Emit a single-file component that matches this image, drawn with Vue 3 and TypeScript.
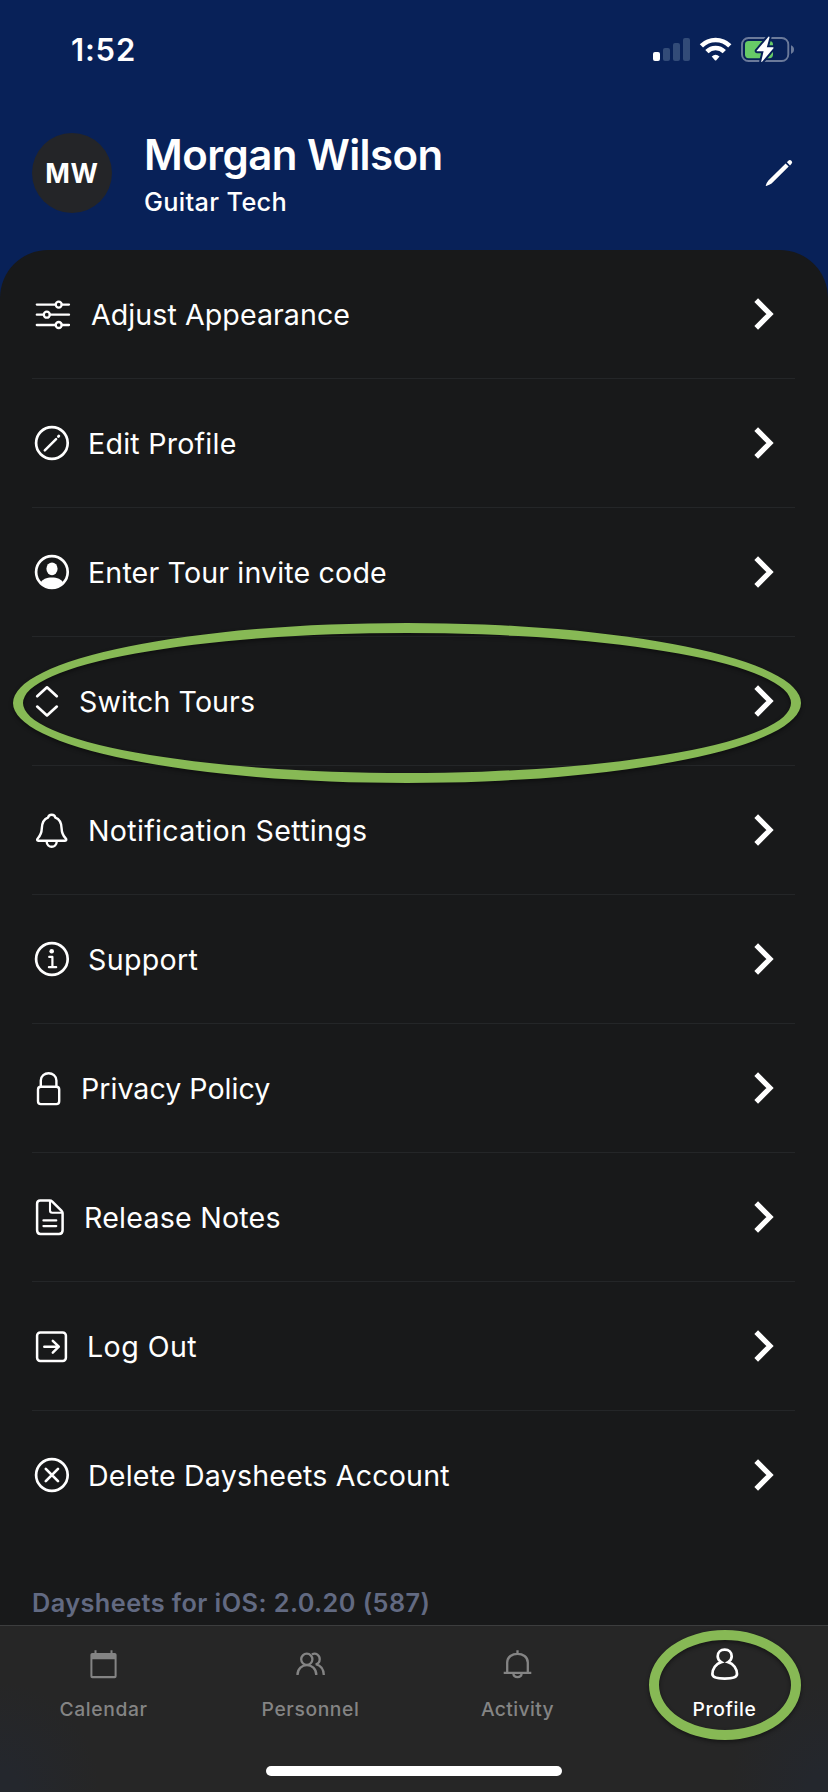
<script setup lang="ts">
interface MenuItem {
  id: string
  label: string
  /** Width of the icon column, which sets where the label starts */
  slot: number
  tracking: number
}

interface Tab {
  id: string
  label: string
  tracking: number
  active?: boolean
}

const menu: MenuItem[] = [
  { id: 'appearance', label: 'Adjust Appearance', slot: 59, tracking: 0.06 },
  { id: 'edit', label: 'Edit Profile', slot: 56, tracking: 0.23 },
  { id: 'invite', label: 'Enter Tour invite code', slot: 56, tracking: 0.15 },
  { id: 'switch', label: 'Switch Tours', slot: 47, tracking: 0.08 },
  { id: 'notifications', label: 'Notification Settings', slot: 56, tracking: 0.31 },
  { id: 'support', label: 'Support', slot: 56, tracking: 0.33 },
  { id: 'privacy', label: 'Privacy Policy', slot: 49, tracking: 0 },
  { id: 'release', label: 'Release Notes', slot: 52, tracking: 0.22 },
  { id: 'logout', label: 'Log Out', slot: 55, tracking: 0.44 },
  { id: 'delete', label: 'Delete Daysheets Account', slot: 56, tracking: 0.19 },
]

const tabs: Tab[] = [
  { id: 'calendar', label: 'Calendar', tracking: 0.61 },
  { id: 'personnel', label: 'Personnel', tracking: 0.61 },
  { id: 'activity', label: 'Activity', tracking: 0.39 },
  { id: 'profile', label: 'Profile', tracking: 0.63, active: true },
]
</script>

<template>
  <div class="screen">
    <div class="statusbar">
      <span class="time">1:52</span>
      <svg class="status-icons" width="144" height="32" viewBox="0 0 144 32">
        <rect x="3" y="18" width="7" height="9" rx="2" fill="#fff" />
        <g fill="#324b78">
          <rect x="13" y="14" width="7" height="13" rx="2" />
          <rect x="23" y="9" width="7" height="18" rx="2" />
          <rect x="33" y="4" width="7" height="23" rx="2" />
        </g>
        <g fill="none" stroke="#fff" stroke-width="4.6">
          <path d="M51.4 11.8A20.2 20.2 0 0 1 79.8 11.8" />
          <path d="M56.9 17.6A12.4 12.4 0 0 1 74.3 17.6" />
        </g>
        <path d="M61.7 22.6Q65.6 19 69.5 22.6L66.3 26.2Q65.6 26.9 64.9 26.2Z" fill="#fff" />
        <rect x="92" y="4" width="46.3" height="23" rx="6.5" fill="none" stroke="#6b7a9a" stroke-width="1.9" />
        <path d="M141 11.3Q144 12.5 144 15.6T141 19.9Z" fill="#6b7a9a" />
        <rect x="95" y="7" width="28" height="17.2" rx="3.6" fill="#67ca67" />
        <path
          d="M118.4 2.8L106.8 16.6Q106.4 17.3 107.2 17.3H113.6L111.2 27.4Q111.4 28.4 112.3 27.6L123.5 14.2Q123.9 13.4 123 13.3H116.8L119.5 3.5Q119.5 2.2 118.4 2.8Z"
          fill="#fff"
          stroke="#082158"
          stroke-width="4"
          paint-order="stroke"
        />
      </svg>
    </div>

    <header class="profile">
      <div class="avatar">MW</div>
      <div class="who">
        <h1>Morgan Wilson</h1>
        <p>Guitar Tech</p>
      </div>
      <svg class="pencil" width="28" height="28" viewBox="0 0 28 28" fill="#fff">
        <path d="M20.6 4.5L23.7 7.6L6.6 24.6Q4.6 26 1.2 27Q.6 27 .8 26.5Q1.7 23.3 3.4 21.4Z" />
        <path d="M21.9 3.3L23.3 1.7Q24.8.3 26.4 1.7T26.5 4.8L25 6.4Z" />
      </svg>
    </header>

    <main class="sheet">
      <ul class="menu">
        <li v-for="item in menu" :key="item.id" class="row">
          <span class="slot" :style="{ width: item.slot + 'px' }">
            <svg class="icon" width="40" height="40" viewBox="0 0 40 40">
              <g v-if="item.id === 'appearance'" stroke-width="2.3">
                <path d="M4.8 10.6H23.7M29.7 10.6H37M4.8 20.7H11.8M17.8 20.7H37M4.8 31H23.7M29.7 31H37" />
                <circle cx="26.7" cy="10.6" r="3" />
                <circle cx="14.8" cy="20.7" r="3" />
                <circle cx="26.7" cy="31" r="3" />
              </g>
              <g v-else-if="item.id === 'edit'">
                <circle cx="19.9" cy="20" r="15.8" />
                <path d="M12.8 27.4L24.1 16.1" stroke-width="2.5" />
                <path d="M26.4 13.5L26.8 13.1" stroke-width="2.8" />
              </g>
              <g v-else-if="item.id === 'invite'">
                <circle cx="19.9" cy="20" r="15.8" />
                <ellipse cx="20" cy="16.8" rx="5.6" ry="6.4" class="solid" />
                <path class="solid" d="M8.6 31C11 23.7 28.8 23.7 31.2 31A15.8 15.8 0 0 1 8.6 31Z" />
              </g>
              <g v-else-if="item.id === 'switch'">
                <path d="M5.2 15.2L15 6.3L24.8 15.2M5.2 25.6L15 34.4L24.8 25.6" />
              </g>
              <g v-else-if="item.id === 'notifications'" stroke-width="2.4">
                <path d="M16 7.7C16.8 3.8 22.6 3.8 23.4 7.7C28.2 9.4 29.4 13 29.6 18.4C29.8 24 31.4 26 33.5 28.2C34.9 29.7 34.4 30.7 33 30.7H6.4C5 30.7 4.5 29.7 5.9 28.2C8 26 9.6 24 9.8 18.4C10 13 11.2 9.4 16 7.7Z" />
                <path d="M14.6 31.2C15 38.6 24.4 38.6 24.8 31.2" />
              </g>
              <g v-else-if="item.id === 'support'">
                <circle cx="19.9" cy="20" r="15.8" />
                <circle cx="19.7" cy="12.2" r="2.3" class="dot" />
                <path stroke-width="2.2" d="M17.2 17.9H20.4V28.2M16.9 28.2H24.2" />
              </g>
              <g v-else-if="item.id === 'privacy'" stroke-width="2.4">
                <rect x="6" y="18.8" width="21.2" height="17.3" rx="2.8" />
                <path d="M8.8 18.8V12.6C8.8 2.8 24.4 2.8 24.4 12.6V18.8" />
              </g>
              <g v-else-if="item.id === 'release'" stroke-width="2.5">
                <path d="M8.2 3.5H17.6Q19.2 3.5 20.3 4.6L29.4 13.6Q30.6 14.8 30.6 16.5V33.2Q30.6 36.9 27 36.9H8.5Q5.1 36.9 5.1 33.2V6.8Q5.1 3.5 8.2 3.5Z" />
                <path stroke-width="2.1" d="M18 4V13.6Q18 15.8 20.2 15.8H30.2M11.4 23.4H24.3M11.4 29.1H24.3" />
              </g>
              <g v-else-if="item.id === 'logout'" stroke-width="2.5">
                <rect x="5.1" y="6.4" width="28.8" height="28.6" rx="3.2" />
                <path d="M12.3 20.7H26.8M20.8 14.8L26.8 20.7L20.8 26.6" />
              </g>
              <g v-else>
                <circle cx="19.9" cy="20" r="15.8" />
                <path d="M13.8 13.9L26 26.1M26 13.9L13.8 26.1" />
              </g>
            </svg>
          </span>
          <span class="label" :style="{ letterSpacing: item.tracking + 'px' }">{{ item.label }}</span>
          <svg class="chevron" width="20" height="32" viewBox="0 0 20 32">
            <path d="M2.2 2.1L16 16L2.2 29.9" fill="none" stroke="#fff" stroke-width="5.2" />
          </svg>
        </li>
      </ul>
      <p class="version">Daysheets for iOS: 2.0.20 (587)</p>
    </main>

    <nav class="tabbar">
      <div class="tabs">
        <div v-for="tab in tabs" :key="tab.id" class="tab" :class="{ active: tab.active }">
          <svg class="tab-icon" width="36" height="36" viewBox="0.5 0 36 36">
            <g v-if="tab.id === 'calendar'">
              <path class="dot" d="M4.9 6.8Q4.9 4.9 6.8 4.9H9V2.3H11V4.9H25V2.3H27V4.9H29.2Q31.1 4.9 31.1 6.8V28.3Q31.1 30.2 29.2 30.2H6.8Q4.9 30.2 4.9 28.3ZM6.9 11.3V28.1H29.1V11.3Z" fill-rule="evenodd" />
            </g>
            <g v-else-if="tab.id === 'personnel'">
              <circle cx="14.3" cy="11.3" r="5.6" />
              <path d="M5 27.1C5 13.9 23.8 13.9 23.8 27.1M19.4 6.4C23.6 4.3 27.4 7.5 27.2 11.5C27.1 14 25.7 15.7 23.3 16.2C28.4 17.6 31.2 21.7 31.3 27.1" />
            </g>
            <g v-else-if="tab.id === 'activity'">
              <path d="M4.2 24.8H31.8M7.7 24.8V14.5C7.7 2.9 28.3 2.9 28.3 14.5V24.8M18 2.3V5.5M13.8 25.3C14.3 30.3 21.7 30.3 22.2 25.3" />
            </g>
            <g v-else stroke-width="2.7">
              <path d="M14.7 14.1C12.5 12.8 11.2 11 11.2 8.3C11.2 4.4 14.1 1.7 18.2 1.7S25.2 4.4 25.2 8.3C25.2 11 23.9 12.8 21.7 14.1C27.1 15.6 30.5 21.1 30.5 26C30.5 29 26.5 30.6 18.2 30.6S5.9 29 5.9 26C5.9 21.1 9.3 15.6 14.7 14.1Z" />
            </g>
          </svg>
          <span class="tab-label" :style="{ letterSpacing: tab.tracking + 'px' }">{{ tab.label }}</span>
        </div>
      </div>
      <div class="home-indicator"></div>
    </nav>

    <div class="ring ring-row"></div>
    <div class="ring ring-tab"></div>
  </div>
</template>

<style>
html,
body {
  background: #18191a;
}
</style>

<style scoped>
.screen {
  position: relative;
  display: flex;
  flex-direction: column;
  width: 828px;
  height: 1792px;
  overflow: hidden;
  background: #082158;
  color: #fff;
  font-family: Inter, 'Liberation Sans', sans-serif;
}

.statusbar {
  display: flex;
  justify-content: space-between;
  align-items: center;
  flex: none;
  height: 100px;
  padding: 0 34px 1px 71px;
  box-sizing: border-box;
}

.status-icons {
  margin-top: 1px;
}

.time {
  font-size: 31px;
  font-weight: 600;
  letter-spacing: 0.8px;
}

.profile {
  display: flex;
  align-items: center;
  flex: none;
  height: 150px;
  padding: 0 35px 4px 32px;
  box-sizing: border-box;
}

.avatar {
  display: flex;
  align-items: center;
  justify-content: center;
  width: 80px;
  height: 80px;
  border-radius: 50%;
  background: #242528;
  font-size: 26.4px;
  font-weight: 650;
  letter-spacing: 0.8px;
}

.who {
  flex: 1;
  padding: 1px 0 0 32px;
}

.who h1 {
  margin: 0;
  font-size: 42px;
  font-weight: 600;
  line-height: 50px;
  letter-spacing: -0.55px;
}

.who p {
  margin: 7px 0 0;
  font-size: 25.3px;
  font-weight: 480;
  line-height: 30px;
  letter-spacing: 0.34px;
}

.sheet {
  flex: 1;
  min-height: 0;
  padding: 0 33px 0 32px;
  border-radius: 48px 48px 0 0;
  background: #18191a;
  overflow: hidden;
}

.menu {
  margin: 0;
  padding: 0;
  list-style: none;
}

.row {
  display: flex;
  align-items: center;
  height: 128px;
  padding-right: 21px;
  border-bottom: 1px solid #242628;
}

.row:last-child {
  border-bottom-color: transparent;
}

.slot {
  flex: none;
  display: flex;
  height: 40px;
}

.icon {
  flex: none;
  fill: none;
  stroke: #fff;
  stroke-width: 2.7;
  stroke-linecap: round;
  stroke-linejoin: round;
}

.solid {
  fill: #fff;
  stroke: none;
}

.dot {
  fill: currentColor;
  stroke: none;
}

.label {
  flex: 1;
  padding-top: 2px;
  font-size: 28.6px;
  line-height: 36px;
  white-space: nowrap;
}

.version {
  margin: 46px 0 0;
  color: #626a82;
  font-size: 25.3px;
  font-weight: 600;
  line-height: 34px;
  letter-spacing: 0.43px;
}

.tabbar {
  flex: none;
  display: flex;
  flex-direction: column;
  justify-content: space-between;
  align-items: center;
  height: 167px;
  padding-bottom: 16px;
  box-sizing: border-box;
  border-top: 1px solid #3c3d3e;
  background:
    radial-gradient(ellipse 100px 110px at 0 100%, #24272d 20%, transparent 100%),
    radial-gradient(ellipse 100px 110px at 100% 100%, #24272d 20%, transparent 100%),
    #262626;
}

.tabs {
  display: flex;
  width: 100%;
}

.tab {
  flex: 1;
  display: flex;
  flex-direction: column;
  align-items: center;
  padding-top: 22px;
  color: #848484;
}

.tab.active {
  color: #fff;
}

.tab-icon {
  fill: none;
  stroke: currentColor;
  stroke-width: 2.3;
}

.tab-label {
  margin-top: 13px;
  font-size: 19.3px;
  font-weight: 500;
  line-height: 24px;
}

.home-indicator {
  width: 296px;
  height: 10px;
  border-radius: 5px;
  background: #fff;
}

/* Green highlight rings laid over the screen */
.ring {
  position: absolute;
  box-sizing: border-box;
  border: 10px solid #87b955;
  border-radius: 50%;
  filter: drop-shadow(0 2px 2px rgba(0, 0, 0, 0.45));
}

.ring-row {
  left: 13px;
  top: 623px;
  width: 788px;
  height: 160px;
}

.ring-tab {
  left: 649px;
  top: 1630px;
  width: 152px;
  height: 110px;
}
</style>
